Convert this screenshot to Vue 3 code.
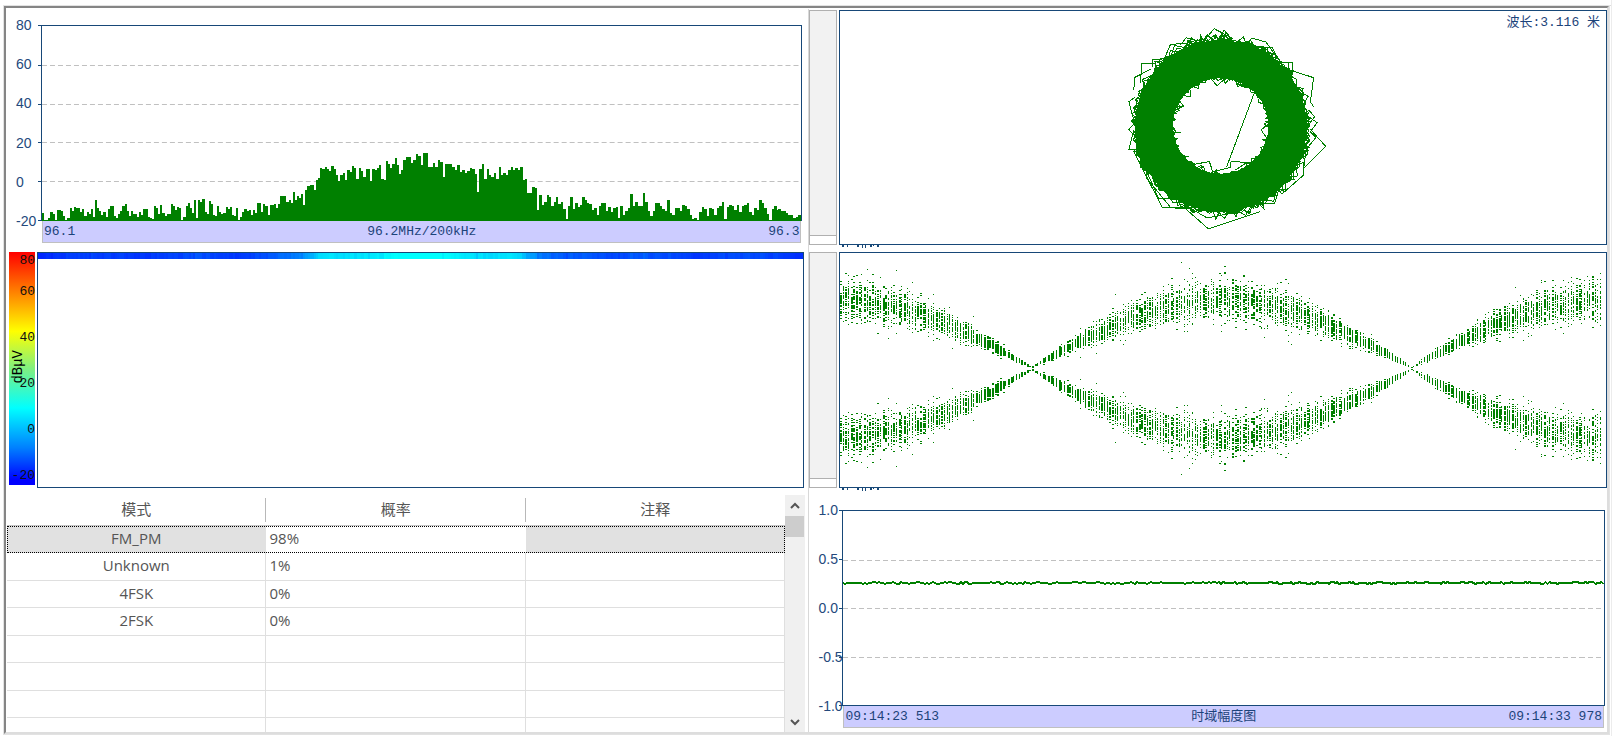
<script setup>
import { ref } from 'vue';

const CHART_W = 760;
const CHART_H = 194;

const dbTicks = [80, 60, 40, 20, 0, -20];
const ampTicks = ['1.0', '0.5', '0.0', '-0.5', '-1.0'];
const gridDb = [1, 2, 3, 4].map(i => Math.round(i * CHART_H / 5));
const gridAmp = [1, 2, 3].map(i => Math.round(i * CHART_H / 4));

const iqZoom = ref(0);
const eyeZoom = ref(0);

const columns = ['模式', '概率', '注释'];
const rows = [
	{ mode: 'FM_PM', rate: '98%' },
	{ mode: 'Unknown', rate: '1%' },
	{ mode: '4FSK', rate: '0%' },
	{ mode: '2FSK', rate: '0%' },
	{}, {}, {}, {}
];
const selected = ref(0);

const createRandom = seed => () => {
	seed = (seed * 1664525 + 1013904223) % 4294967296;
	return seed / 4294967296;
};

const gauss = rand => (rand() + rand() + rand() + rand() - 2) / 1.15;

// level blocks: [start x, levels spread evenly up to the next block]
const blocks = [
	[0, [7, 0, 0, 2, 8, 6, 0, 10, 10, 9, 4, 0, 2, 12, 9, 13, 12, 12, 8, 11, 4, 8, 6, 11, 3]],
	[53, [20, 12, 9, 5, 8, 3, 11, 14, 14, 4, 2, 6, 9, 14, 16, 9, 4, 9, 6, 6, 3, 8, 5, 11, 11, 3, 2, 1]],
	[112, [14, 12, 6, 15, 7, 4, 6, 6, 16, 14, 10, 13, 12, 0, 3, 14, 17, 12, 7]],
	[152, [20, 2, 20, 18, 21, 8, 6, 19, 16, 5, 4, 14, 8, 6, 7, 13, 11, 13, 5, 4, 12, 0, 3, 8, 11, 9, 10, 5, 10, 7]],
	[215, [17, 17, 8, 16, 14, 5, 15, 15, 16, 12, 16, 24, 24, 24, 18, 20, 17, 28, 20, 24, 22, 26, 15, 30, 34, 35, 35, 30, 40, 42]],
	[278, [52, 51, 53, 51, 49, 54, 51, 45, 39, 45, 47, 40, 50, 48, 54, 52, 41, 52, 49, 43, 51, 51, 39, 51, 50, 52, 55, 41, 40]],
	[344, [59, 56, 52, 56, 62, 55, 46]],
	[359, [50, 60, 63, 63, 57, 60, 66, 64, 55, 67, 67, 53, 53, 57, 53, 60, 58, 43, 56, 56, 56, 53, 50, 55, 48, 50, 47, 49, 52, 51, 46]],
	[435, [28, 51, 56, 41, 51, 45, 43, 47, 41, 53, 45, 47, 45, 50, 53, 50, 52, 50, 53, 40, 41, 27, 27, 33, 32]],
	[495, [10, 25, 15, 18, 25, 23, 14, 18, 23, 16, 18, 11, 1, 14, 23, 11, 17, 13, 15, 23, 20, 17, 16, 10, 12, 5, 14, 17, 17, 9, 13, 8, 12, 13]],
	[576, [2, 14, 5, 9, 12, 26, 14, 18, 14, 14, 27, 18, 9, 4, 9, 17, 17, 14, 11, 9, 20, 7, 5, 12, 12, 9, 15, 14, 11, 5]],
	[650, [1, 2, 0, 8, 13, 11, 4, 12, 11, 5, 12, 14, 18, 1, 13, 15, 14, 10, 15, 8, 14, 15, 17, 8, 5, 12, 10]],
	[717, [20, 17, 12, 6, 0, 11, 14, 10, 11, 9, 9, 7, 5, 5, 2, 3, 5]],
	[760, []]
];

const bars = [];
blocks.forEach(([start, levels], index) => {
	if (!levels.length) return;
	const step = (blocks[index + 1][0] - start) / levels.length;
	levels.forEach((level, i) => {
		const x = Math.round(start + i * step);
		bars.push({ x, w: Math.round(start + (i + 1) * step) - x, level });
	});
});

const spectrumPath = bars
	.map(({ x, w, level }) => `M${x} ${CHART_H + 1}v${-level - 1}h${w}v${level + 1}z`)
	.join('');

const waterfall = bars.map((bar, i) => {
	const near = bars.slice(Math.max(0, i - 6), i + 7);
	const mean = near.reduce((sum, item) => sum + item.level, 0) / near.length;
	const green = Math.min(255, Math.round(25 + mean * 3.1 + bar.level * 1.1));
	return { ...bar, color: `rgb(0, ${green}, 255)` };
});

// ragged inner and outer edge of the constellation ring
const ringEdge = (() => {
	const rand = createRandom(17);
	const point = (angle, radius) =>
		`${Math.round(426 + Math.cos(angle) * radius)} ${Math.round(348 + Math.sin(angle) * radius)}`;
	let d = '';
	for (let i = 0; i < 480; i++) {
		const angle = rand() * Math.PI * 2;
		const turn = .06 + rand() * .2;
		const outer = 254 + rand() * rand() * 30;
		d += `M${point(angle, 252)}L${point(angle + turn / 2, outer)}L${point(angle + turn, 252)}`;
		if (i % 4 === 0) {
			const inner = 146 - rand() * rand() * 20;
			d += `M${point(angle, 150)}L${point(angle + turn / 2, inner)}L${point(angle + turn, 150)}`;
		}
	}
	return d;
})();

const ringStray = [
	'M376 92L406 56L462 85', 'M420 85L436 60L460 88', 'M385 95L406 76L430 95',
	'M255 150L275 103L323 100', 'M305 105L322 83L380 98', 'M510 95L520 84L562 96L600 150',
	'M530 112H580L605 158', 'M185 220L189 161H228', 'M222 170V147H250', 'M165 240L168 202L215 178',
	'M600 158H640V195', 'M640 182L705 203L695 275L705 290', 'M690 300L708 320L685 350',
	'M690 320L715 338L695 365L712 382L685 415', 'M695 358L741 409L675 475L685 400',
	'M170 260L150 275L165 330', 'M165 360L150 420H180', 'M165 425L250 592L320 596L389 657L545 605',
	'M180 430L240 567H290', 'M200 500L275 592H330L385 624L480 605', 'M600 540L610 552L675 495V460',
	'M560 580H588L600 540', 'M528 245L444 470', 'M335 465L392 455L402 486L455 472L457 455L530 458',
	'M470 480L498 462L545 450', 'M395 205L415 227L440 205', 'M460 205L478 222L520 235',
	'M270 368H308', 'M300 270L314 288L290 300', 'M300 440H332', 'M560 335H580M570 340L547 360L565 385'
].join('');

// eye pattern, mirrored around the zero line
const eyePath = (() => {
	const rand = createRandom(5);
	let d = '';
	for (let i = 0; i < 286; i++) {
		const x = Math.round(i * 8 / 3);
		const w = rand() < .4 ? 2 : 1;
		const carrier = Math.abs(Math.cos((x - 381) / 380.5 * Math.PI));
		const seen = new Set();
		for (let n = 0; n < 30; n++) {
			const spread = rand() < .12 ? 30 : 18;
			seen.add(Math.round(carrier * (67 + gauss(rand) * spread) + 1));
		}
		seen.forEach(y => {
			d += `M${x} ${115 - y}h${w}v1h-${w}zM${x} ${115 + y}h${w}v1h-${w}z`;
		});
	}
	return d;
})();

const amplitudePoints = (() => {
	const rand = createRandom(29);
	const points = [];
	for (let x = 0; x <= CHART_W; x += 2) {
		const value = rand();
		points.push(`${x},${value < .2 ? 71 : value > .85 ? 73 : 72}`);
	}
	return points.join(' ');
})();

</script>

<template>

<div class="window">
	<main class="frame">
		<section class="panel chart spectrum">
			<div class="axis">
				<span v-for="tick in dbTicks" :key="tick">{{ tick }}</span>
			</div>
			<div class="plot">
				<svg viewBox="0 0 760 194" preserveAspectRatio="none">
					<path v-for="y in gridDb" :key="y" class="grid" :d="`M0 ${y}.5H760`" />
					<path class="tick" d="M-4 -.5H0M-4 39.5H0M-4 78.5H0M-4 116.5H0M-4 155.5H0M-4 194.5H0" />
					<path class="fill" :d="spectrumPath" />
				</svg>
			</div>
			<div class="range">
				<span>96.1</span>
				<span>96.2MHz/200kHz</span>
				<span>96.3</span>
			</div>
		</section>

		<section class="panel scope">
			<input v-model="iqZoom" class="slider" type="range" min="0" max="100" aria-label="星座图缩放">
			<div class="view">
				<svg viewBox="0 0 766 233">
					<g class="ring" transform="translate(239 -1) scale(.3333)">
						<circle cx="426" cy="348" r="200" />
						<path :d="ringEdge" />
						<path :d="ringStray" />
					</g>
				</svg>
				<span class="wave-length">波长:3.116 米</span>
				<svg class="cut" viewBox="0 0 40 3">
					<path d="M2 0h2v2h-2zM7 0h1v2h-1zM17 0h2v2h-2zM22 0h1v3h-1zM25 0h1v3h-1zM30 0h2v2h-2zM33 0h1v1h-1zM37 0h2v2h-2z" />
				</svg>
			</div>
		</section>

		<section class="panel fall">
			<div class="scale">
				<span v-for="tick in dbTicks" :key="tick">{{ tick }}</span>
				<span class="unit">dBμV</span>
			</div>
			<div class="view">
				<svg class="strip" viewBox="0 0 760 6" preserveAspectRatio="none">
					<rect
						v-for="(bar, index) in waterfall"
						:key="index"
						:x="bar.x"
						y="0"
						:width="bar.w"
						height="6"
						:fill="bar.color"
					/>
				</svg>
			</div>
		</section>

		<section class="panel scope">
			<input v-model="eyeZoom" class="slider" type="range" min="0" max="100" aria-label="眼图缩放">
			<div class="view">
				<svg viewBox="0 0 766 234" preserveAspectRatio="none">
					<path class="fill" :d="eyePath" />
				</svg>
				<svg class="cut" viewBox="0 0 40 3">
					<path d="M2 0h2v2h-2zM7 0h1v2h-1zM17 0h2v2h-2zM22 0h1v3h-1zM25 0h1v3h-1zM30 0h2v2h-2zM33 0h1v1h-1zM37 0h2v2h-2z" />
				</svg>
			</div>
		</section>

		<section class="panel modes">
			<div class="table-box">
				<table>
					<thead>
						<tr>
							<th v-for="name in columns" :key="name"><span>{{ name }}</span></th>
						</tr>
					</thead>
					<tbody>
						<tr
							v-for="(row, index) in rows"
							:key="index"
							:class="{
								active: selected === index
							}"
							@click="selected = index"
						>
							<td>{{ row.mode }}</td>
							<td>{{ row.rate }}</td>
							<td></td>
						</tr>
					</tbody>
				</table>
			</div>
			<div class="scrollbar">
				<button type="button" aria-label="向上">
					<svg viewBox="0 0 10 8"><path d="M1 6L5 2L9 6" /></svg>
				</button>
				<div class="thumb"></div>
				<button type="button" aria-label="向下">
					<svg viewBox="0 0 10 8"><path d="M1 2L5 6L9 2" /></svg>
				</button>
			</div>
		</section>

		<section class="panel chart amplitude">
			<div class="axis">
				<span v-for="tick in ampTicks" :key="tick">{{ tick }}</span>
			</div>
			<div class="plot">
				<svg viewBox="0 0 760 194" preserveAspectRatio="none">
					<path v-for="y in gridAmp" :key="y" class="grid" :d="`M0 ${y}.5H760`" />
					<path class="tick" d="M-4 -.5H0M-4 48.5H0M-4 97.5H0M-4 146.5H0M-4 194.5H0" />
					<polyline class="trace" :points="amplitudePoints" />
				</svg>
			</div>
			<div class="range">
				<span>09:14:23 513</span>
				<span>时域幅度图</span>
				<span>09:14:33 978</span>
			</div>
		</section>
	</main>
</div>

</template>

<style>
body {
	margin: 0;
	background-color: #ffffff;
}
</style>

<style scoped>
.window {
	box-sizing: border-box;
	height: 100vh;
	min-height: 560px;
	margin: 0 4px 0 3px;
	padding-top: 5px;
	border-right: 1px solid #ececec;
	background: linear-gradient(#dcdcdc, #dcdcdc) 0 5px / 100% 1px no-repeat;

	.frame {
		box-sizing: border-box;
		display: grid;
		grid-template-columns: 803fr 798fr;
		grid-template-rows: 242fr 243fr 238fr;
		height: calc(100% - 3px);
		margin: 1px 2px 0 1px;
		padding: 1px 0 0 1px;
		border: 2px solid #dddddd;
		border-top-color: #858585;
		border-left-color: #858585;
		outline: 1px solid #e2e2e2;
	}
}

.panel {
	box-sizing: border-box;
	min-width: 0;
	min-height: 0;
}

.panel:nth-child(odd) {
	border-right: 1px solid #d8d8d8;
}

svg {
	display: block;
	width: 100%;
	height: 100%;
	shape-rendering: crispEdges;
}

.chart {
	display: grid;
	grid-template-columns: 34px 1fr;
	grid-template-rows: 1fr 22px;
	padding: 16px 6px 8px 0;

	.axis {
		display: flex;
		flex-direction: column;
		justify-content: space-between;
		margin: -9px 0;
		padding-left: 9px;
		font-family: "Liberation Sans", sans-serif;
		font-size: 14px;
		line-height: 18px;
		color: #24497c;
	}

	.plot {
		min-height: 0;
		border: 1px solid #174878;
	}

	.plot svg {
		overflow: visible;
	}

	.range {
		grid-column: 2;
		display: flex;
		justify-content: space-between;
		margin: 0 1px;
		padding: 0 1px;
		border: solid #c0c0c0;
		border-width: 0 1px 1px;
		background-color: #ccccff;
		font-family: "Liberation Mono", "Noto Sans CJK SC", monospace;
		font-size: 13px;
		line-height: 22px;
		color: #1c437a;
	}
}

.amplitude {
	grid-template-columns: 33px 1fr;
	padding: 16px 2px 4px 0;
}

.grid {
	stroke: #c0c0c0;
	stroke-dasharray: 5 3;
	fill: none;
}

.tick {
	stroke: #174878;
	fill: none;
}

.fill {
	fill: #008000;
}

.trace {
	fill: none;
	stroke: #008000;
	stroke-width: 2;
}

.view {
	position: relative;
	flex: 1;
	min-width: 0;
	border: 1px solid #174878;
}

.scope {
	display: flex;
	gap: 2px;
	padding: 1px 0 6px;

	.wave-length {
		position: absolute;
		top: 2px;
		right: 6px;
		font-family: "Liberation Mono", "Noto Sans CJK SC", monospace;
		font-size: 13px;
		line-height: 20px;
		color: #1c437a;
	}

	.cut {
		position: absolute;
		top: calc(100% + 1px);
		left: 0;
		width: 40px;
		height: 3px;
		fill: #174878;
	}
}

.slider {
	appearance: none;
	box-sizing: border-box;
	flex: none;
	width: 28px;
	height: 100%;
	margin: 0;
	border: 1px solid #b0b0b0;
	background-color: #f2f2f2;
	writing-mode: vertical-lr;
	direction: rtl;

	&::-webkit-slider-thumb {
		appearance: none;
		box-sizing: border-box;
		width: 26px;
		height: 9px;
		border-top: 1px solid #b0b0b0;
		background-color: #ffffff;
	}
}

.ring {
	stroke: #008000;
	fill: none;

	circle {
		stroke-width: 114;
	}

	path {
		vector-effect: non-scaling-stroke;
	}
}

.fall {
	display: flex;
	gap: 2px;
	padding: 1px 4px 6px 2px;

	.scale {
		position: relative;
		display: grid;
		grid-template-rows: 31fr 46fr 47fr 46fr 46fr 17fr;
		flex: none;
		width: 26px;
		margin-bottom: 3px;
		background: linear-gradient(#ff0000, #ff8000 17%, #ffff00 34%, #80f080 50%, #00ffff 67%, #0080ff 84%, #0000ff 98%);
		font-family: "Liberation Mono", monospace;
		font-size: 13px;
		line-height: 18px;
		text-align: right;
		color: #101010;
	}

	.unit {
		position: absolute;
		top: 42%;
		left: 0;
		writing-mode: vertical-rl;
		transform: rotate(180deg);
		font-size: 14px;
		color: #000000;
	}

	.strip {
		height: 6px;
	}
}

.modes {
	display: flex;
	padding: 1px 3px 0 0;

	.table-box {
		flex: 1;
		min-width: 0;
		overflow: hidden;
	}

	table {
		width: 100%;
		table-layout: fixed;
		border-collapse: separate;
		border-spacing: 0;
		font-family: "Open Sans", "Noto Sans CJK SC", sans-serif;
		font-size: 15px;
		line-height: 20px;
		color: #555555;
	}

	th {
		box-sizing: border-box;
		height: 31px;
		padding: 3px 0;
		border-bottom: 1px solid #c4c4c4;
		font-weight: 400;
	}

	th span {
		display: block;
		height: 24px;
		border-right: 1px solid #b8b8b8;
		line-height: 22px;
	}

	th:last-child span {
		border-right-color: transparent;
	}

	td {
		box-sizing: border-box;
		height: 27px;
		padding: 0 3px 3px;
		border: solid #dfdfdf;
		border-width: 0 1px 1px 0;
	}

	tr:nth-child(even) td {
		height: 28px;
	}

	td:first-child {
		text-align: center;
	}

	.active {
		outline: 1px dotted #000000;
		outline-offset: -1px;
	}

	.active td {
		border-color: transparent;
		background-color: #e1e1e1;
	}

	.active td:nth-child(2) {
		background-color: #ffffff;
	}
}

.scrollbar {
	display: flex;
	flex-direction: column;
	flex: none;
	width: 20px;
	background-color: #f0f0f0;

	button {
		display: flex;
		align-items: center;
		justify-content: center;
		height: 21px;
		padding: 0;
		border: 0;
		background: none;
	}

	button:last-child {
		margin-top: auto;
	}

	svg {
		width: 10px;
		height: 8px;
		fill: none;
		stroke: #555555;
		stroke-width: 2;
		shape-rendering: auto;
	}

	.thumb {
		height: 21px;
		margin-right: 1px;
		background-color: #cdcdcd;
	}
}
</style>
